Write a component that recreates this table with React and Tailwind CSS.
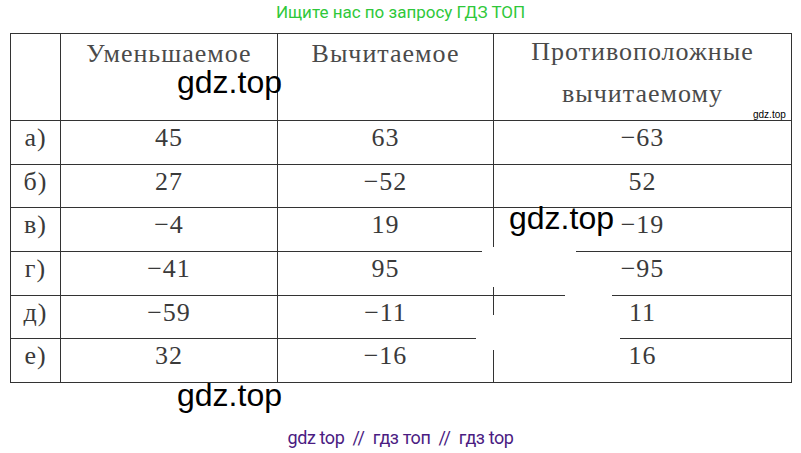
const ROWS = [
  ['а)', '45', '63', '−63'],
  ['б)', '27', '−52', '52'],
  ['в)', '−4', '19', '−19'],
  ['г)', '−41', '95', '−95'],
  ['д)', '−59', '−11', '11'],
  ['е)', '32', '−16', '16'],
];

const serif = "font-['Liberation_Serif',serif]";

// white blotches left by an erased watermark
const ERASED = [
  'left-[482px] top-[249px] w-[94px] h-[4px]',
  'left-[491px] top-[247px] w-[4px] h-[40px]',
  'left-[565px] top-[293px] w-[47px] h-[4px]',
  'left-[491px] top-[315px] w-[4px] h-[35px]',
  'left-[476px] top-[336px] w-[144px] h-[4px]',
];

export default function App() {
  return (
    <div className="relative w-[801px] h-[453px] bg-white overflow-hidden">
      <div className="h-[33px] flex items-start justify-center pt-[1px] font-['Roboto',sans-serif] text-[17px] leading-[22px] text-[#2fc83a]">
        Ищите нас по запросу ГДЗ ТОП
      </div>

      <table className={`ml-[10px] w-[781px] table-fixed border-collapse ${serif} text-[26px] tracking-[1px] text-[#3a3a3a]`}>
        <colgroup>
          <col className="w-[50px]" />
          <col className="w-[217px]" />
          <col className="w-[216px]" />
          <col className="w-[298px]" />
        </colgroup>
        <thead>
          <tr className="h-[87px]">
            <th className="border border-[#333] align-top"></th>
            <th className="border border-[#333] align-top font-normal leading-[40px] pt-0 text-[#4a4a4a]">Уменьшаемое</th>
            <th className="border border-[#333] align-top font-normal leading-[40px] pt-0 text-[#4a4a4a]">Вычитаемое</th>
            <th className="border border-[#333] align-top font-normal leading-[42px] pt-0 -mt-[2px] text-[#4a4a4a]">
              <div className="-mt-[3px]">Противоположные<br />вычитаемому</div>
            </th>
          </tr>
        </thead>
        <tbody>
          {ROWS.map(r => (
            <tr key={r[0]} className="h-[43.7px]">
              {r.map((c, i) => (
                <td key={i} className="border border-[#333] align-top text-center leading-[34px] pt-0">{c}</td>
              ))}
            </tr>
          ))}
        </tbody>
      </table>

      <div className="absolute left-0 right-0 top-[427px] text-center font-['Roboto',sans-serif] text-[18px] leading-[22px] text-[#4b1c82] whitespace-pre tracking-[-0.4px]">
        gdz top  //  гдз топ  //  гдз top
      </div>

      {ERASED.map(c => <div key={c} className={`absolute bg-white ${c}`} />)}

      <div className="absolute left-[177px] top-[64px] font-['Liberation_Sans',sans-serif] text-[32px] leading-[36px] text-black">gdz.top</div>
      <div className="absolute left-[509px] top-[200px] font-['Liberation_Sans',sans-serif] text-[32px] leading-[36px] text-black">gdz.top</div>
      <div className="absolute left-[177px] top-[377px] font-['Liberation_Sans',sans-serif] text-[32px] leading-[36px] text-black">gdz.top</div>
      <div className="absolute left-[753px] top-[109px] font-['Liberation_Sans',sans-serif] text-[10px] leading-[12px] text-black">gdz.top</div>
    </div>
  );
}
